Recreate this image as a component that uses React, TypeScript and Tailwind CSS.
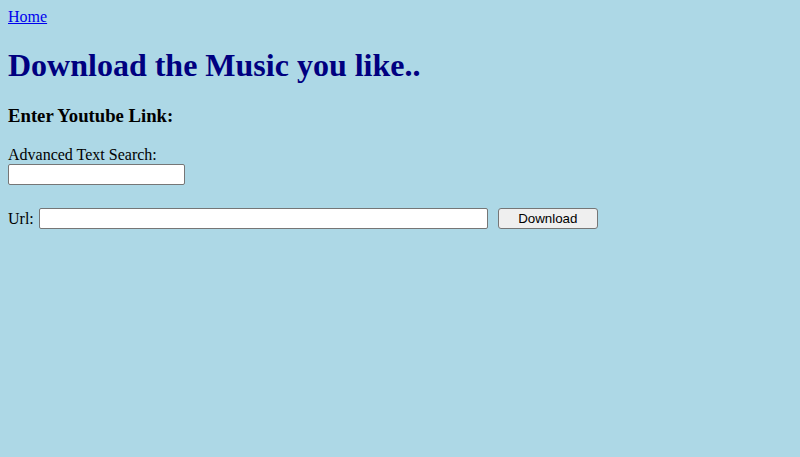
export default function App() {
  return (
    <div className="min-h-screen bg-[#add8e6] p-2 font-['Liberation_Serif',serif] text-base text-black">
      <a href="#" className="block w-fit leading-[18px] text-[#0000ee] underline">
        Home
      </a>
      <h1 className="mt-[21px] mb-[21px] text-[32px] font-bold leading-[37px] text-[#000080]">
        Download the Music you like..
      </h1>
      <h3 className="mb-[19px] text-[18.72px] font-bold leading-[22px]">Enter Youtube Link:</h3>
      <div className="leading-[18px]">Advanced Text Search:</div>
      <input
        type="text"
        className="block h-[21px] w-[177px] rounded-[2px] border border-[#767676] bg-white px-[2px] outline-none"
      />
      <div className="mt-[23px] flex items-center">
        <span className="leading-[18px]">Url:</span>
        <input
          type="text"
          className="ml-[5px] h-[21px] w-[449px] rounded-[2px] border border-[#767676] bg-white px-[2px] outline-none"
        />
        <button className="ml-[10px] h-[21px] w-[100px] rounded-[3px] border border-[#767676] bg-[#efefef] font-['Liberation_Sans',sans-serif] text-[13.33px] leading-none text-black">
          Download
        </button>
      </div>
    </div>
  );
}
